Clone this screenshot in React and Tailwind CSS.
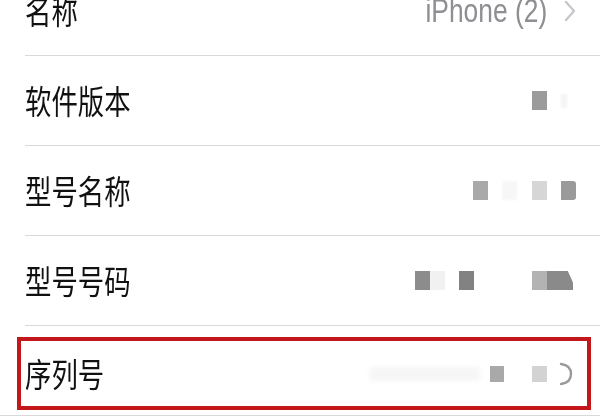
import React from "react";

const FONT = { fontFamily: '"Noto Sans CJK SC", "Noto Sans", sans-serif' };

function Label({ children }) {
  return (
    <span className="inline-block origin-left scale-x-[0.8] text-[33px] leading-none text-[#111111] whitespace-nowrap">
      {children}
    </span>
  );
}

function Block({ className }) {
  return <div className={`h-[19px] w-[15px] blur-[0.4px] ${className}`} />;
}

function Row({ label, children }) {
  return (
    <div className="h-[90px] pl-[25px]">
      <div className="flex h-full items-center border-b-[1.5px] border-[#d9d9d9] pr-[24px]">
        <Label>{label}</Label>
        <div className="ml-auto flex items-center">{children}</div>
      </div>
    </div>
  );
}

export default function App() {
  return (
    <div className="h-[418px] w-[600px] overflow-hidden bg-white" style={FONT}>
      <div className="mt-[-34px]">
        <Row label="名称">
          <span
            className="inline-block origin-right scale-x-[0.8] text-[33px] leading-none text-[#8e8e93] whitespace-nowrap"
            style={{ fontFamily: '"Liberation Sans", Arial, sans-serif' }}
          >
            iPhone (2)
          </span>
          <svg width="12" height="22" viewBox="0 0 12 22" className="ml-[17px]">
            <polyline points="2,2 10,11 2,20" fill="none" stroke="#c7c7cc" strokeWidth="2.4" strokeLinecap="round" strokeLinejoin="round" />
          </svg>
        </Row>

        <Row label="软件版本">
          <Block className="bg-[#9b9b9b]" />
          <div className="ml-[14px] h-[14px] w-[6px] bg-[#f4f4f4] blur-[1px]" />
          <div className="w-[9px]" />
        </Row>

        <Row label="型号名称">
          <Block className="bg-[#a9a9a9]" />
          <div className="ml-[14px] h-[19px] w-[15px] bg-[#f7f7f7] blur-[1px]" />
          <div className="ml-[15px]">
            <Block className="bg-[#d6d6d6]" />
          </div>
          <div className="ml-[14px]">
            <Block className="rounded-r-[3px] bg-[#9a9a9a]" />
          </div>
        </Row>

        <Row label="型号号码">
          <Block className="bg-[#8c8c8c]" />
          <Block className="bg-[#f1f1f1]" />
          <div className="ml-[14px]">
            <Block className="bg-[#828282]" />
          </div>
          <div className="ml-[58px] flex">
            <Block className="bg-[#b3b3b3]" />
            <div className="h-[19px] w-[26px] bg-[#8a8a8a] blur-[0.4px] [clip-path:polygon(0_0,80%_0,100%_60%,100%_100%,0_100%)]" />
          </div>
          <div className="w-[3px]" />
        </Row>

        {/* serial number row, outlined */}
        <div className="h-[90px] border-b-[1.5px] border-[#d9d9d9] pl-[17px] pr-[9px] pt-[11px]">
          <div className="flex h-[73px] items-center border-[4px] border-[#c3171c] pl-[4px] pr-[14px]">
            <Label>序列号</Label>
            <div className="ml-auto flex items-center">
              <div className="mr-[10px] h-[14px] w-[110px] bg-[#f6f6f6] blur-[2px]" />
              <div className="h-[16px] w-[14px] bg-[#a9a9a9] blur-[0.4px]" />
              <div className="ml-[28px] h-[16px] w-[15px] bg-[#d3d3d3] blur-[0.4px]" />
              <svg width="15" height="24" viewBox="0 0 15 24" className="ml-[11px]">
                <path d="M3 2 C11 3 13 8 13 12 C13 17 10 21 3 22" fill="none" stroke="#9a9a9a" strokeWidth="2.4" strokeLinecap="round" />
              </svg>
            </div>
          </div>
        </div>
      </div>
    </div>
  );
}
